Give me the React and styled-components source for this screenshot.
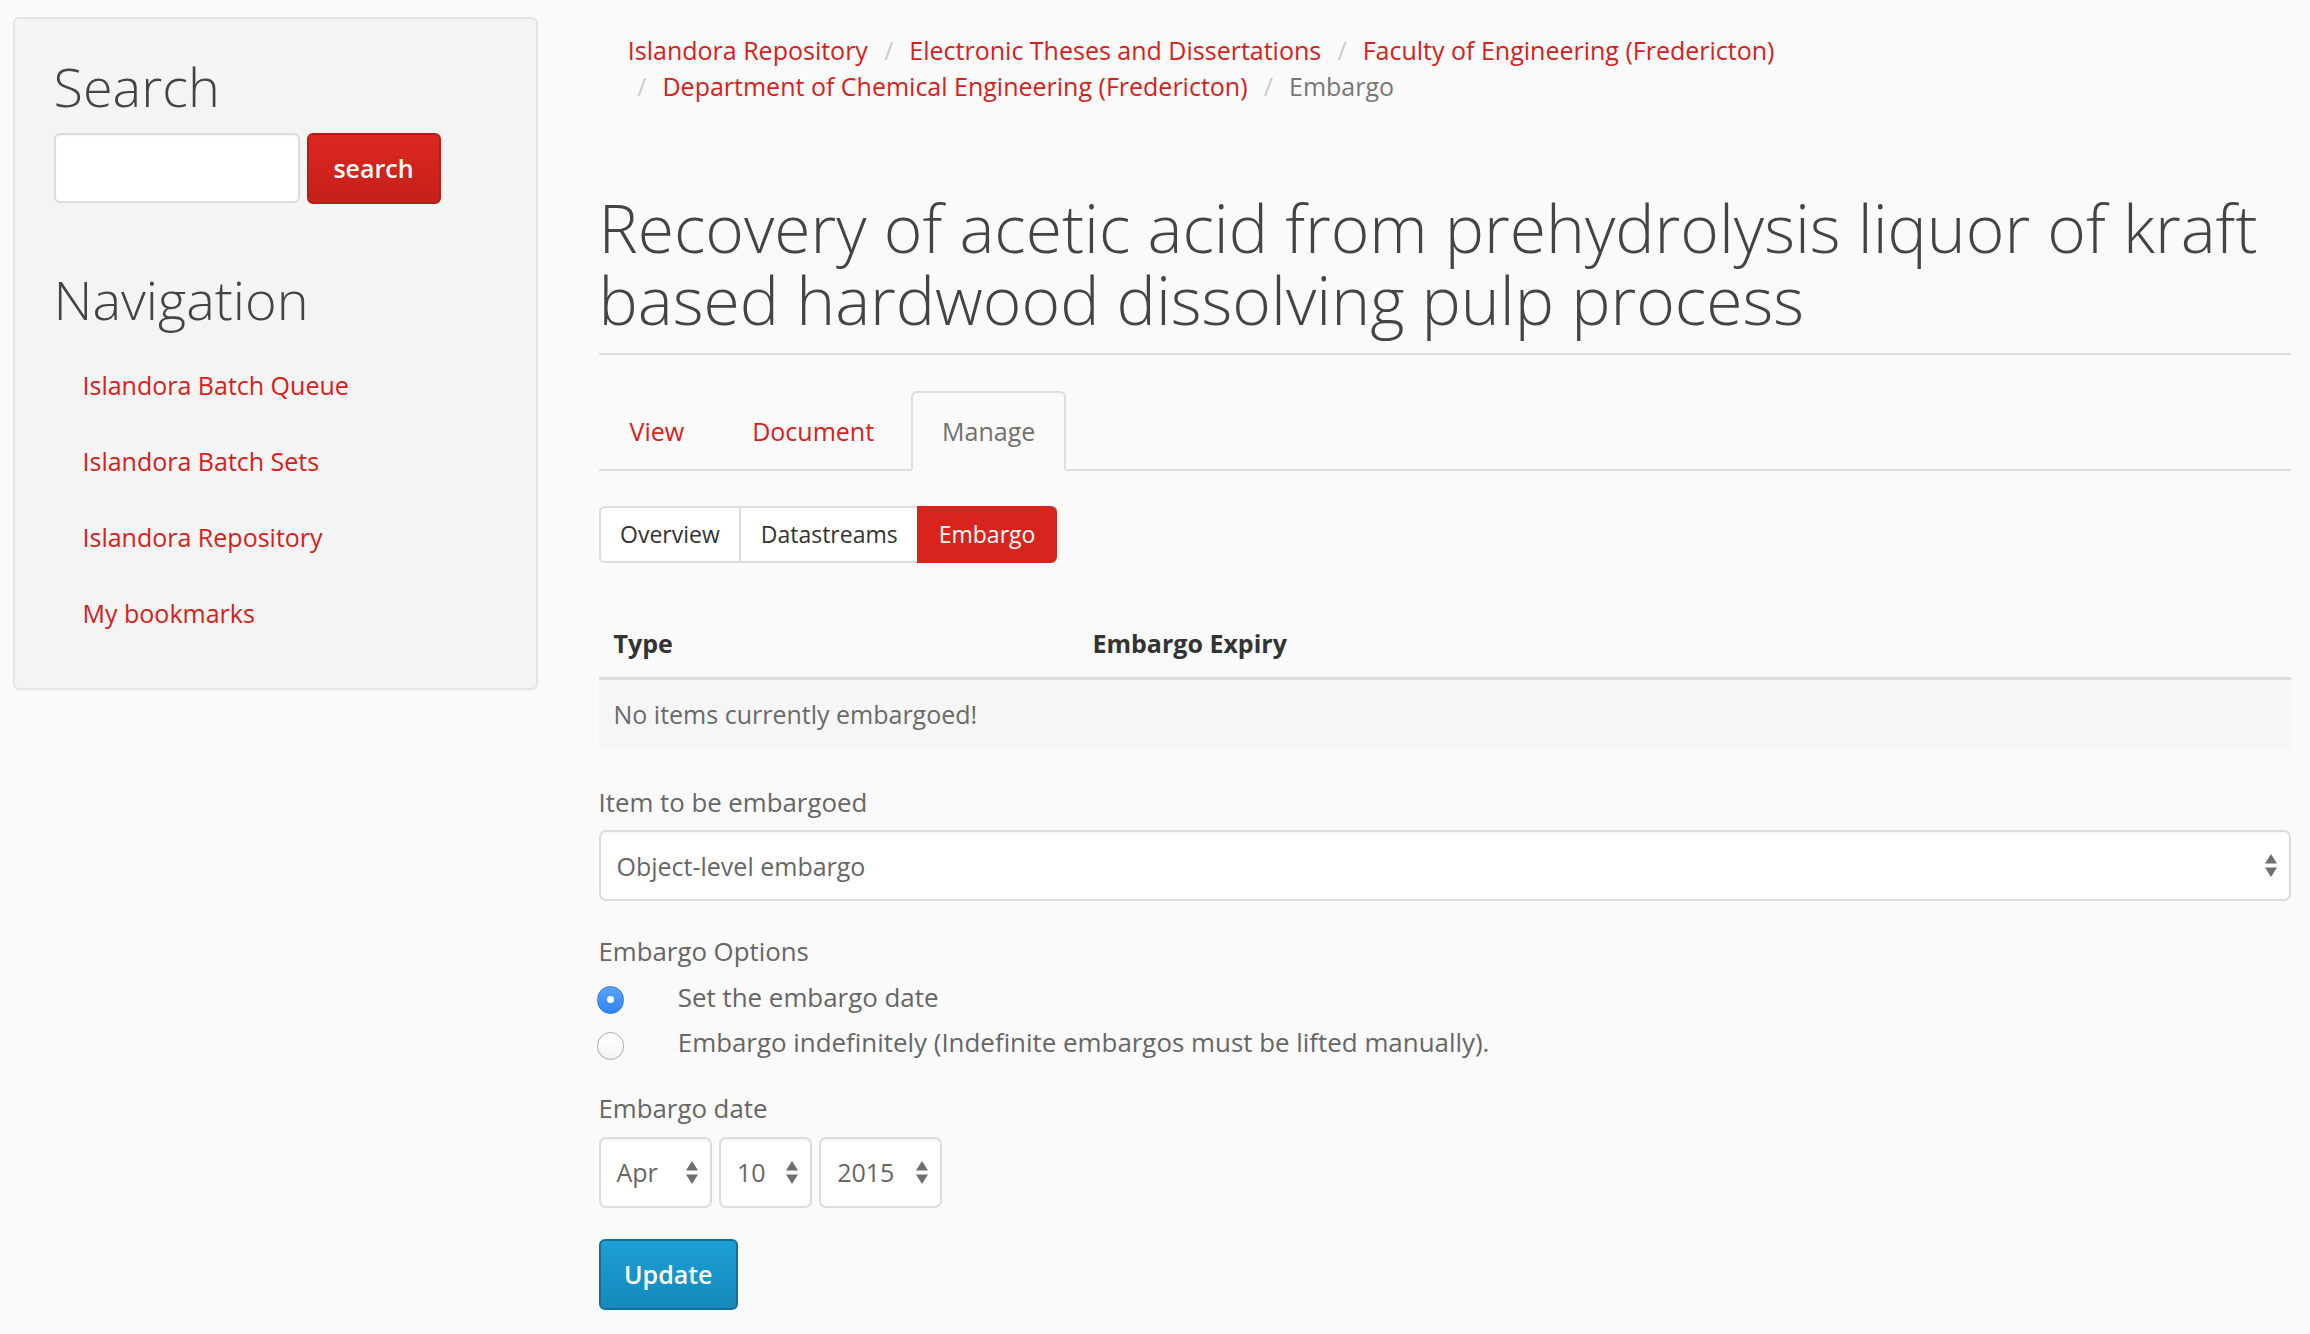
import React from 'react'
import styled, { createGlobalStyle } from 'styled-components'

const GlobalStyle = createGlobalStyle`
  * { box-sizing: border-box; }
  html, body {
    margin: 0;
    padding: 0;
    background: #fafafa;
  }
  body {
    font-family: 'Open Sans', 'Noto Sans', sans-serif;
    font-size: 25px;
    color: #555;
  }
`

const RED = '#d8201a'

const Page = styled.div`
  display: flex;
  align-items: flex-start;
  gap: 61px;
  width: 2310px;
  min-height: 1334px;
  padding: 16.5px 19px 0 12.5px;
`

/* ---------- sidebar ---------- */

const Sidebar = styled.aside`
  flex: none;
  width: 525px;
  background: #f4f4f4;
  border: 2px solid #e4e4e4;
  border-radius: 6px;
  padding: 37.5px 20px 36.5px 39px;
`

const BlockTitle = styled.h2`
  margin: ${p => p.$top || 0}px 0 ${p => p.$bottom || 0}px;
  font-size: 54px;
  font-weight: 300;
  line-height: 60px;
  color: #444;
`

const SearchForm = styled.form`
  display: flex;
  align-items: flex-start;
  gap: 7px;
`

const TextInput = styled.input`
  width: 246px;
  height: 70px;
  border: 2px solid #dcdcdc;
  border-radius: 6px;
  background: #fff;
  box-shadow: inset 0 1px 2px rgba(0, 0, 0, 0.06);
  font: inherit;
  padding: 0 14px;
`

const SearchButton = styled.button`
  width: 134px;
  height: 71px;
  border: 2px solid #b51d17;
  border-radius: 6px;
  background: linear-gradient(#dc271f, #c5201a);
  color: #fff;
  font-family: inherit;
  font-size: 25px;
  font-weight: 600;
  padding: 0;
`

const NavList = styled.ul`
  list-style: none;
  margin: 0;
  padding: 0 0 0 29px;
`

const NavLink = styled.a`
  display: block;
  line-height: 76px;
  color: ${RED};
  text-decoration: none;
`

/* ---------- main ---------- */

const Main = styled.main`
  flex: 1;
  min-width: 0;
`

const Breadcrumb = styled.ol`
  display: flex;
  flex-wrap: wrap;
  column-gap: 6.8px;
  list-style: none;
  margin: 16.8px 0 0;
  padding: 0 0 0 29.3px;
  line-height: 35.3px;
`

const Crumb = styled.li`
  white-space: nowrap;
  color: ${p => (p.$active ? '#777' : RED)};
`

const Sep = styled.span`
  color: #ccc;
  margin: 0 16px 0 9.5px;
`

const Title = styled.h1`
  margin: 87.5px 0 0;
  font-size: 66px;
  font-weight: 300;
  line-height: 72px;
  color: #444;
`

const Rule = styled.hr`
  margin: 17.2px 0 0;
  border: 0;
  border-top: 2px solid #dedede;
`

const TabBar = styled.ul`
  display: flex;
  list-style: none;
  margin: 36px 0 0;
  padding: 0;
  border-bottom: 2px solid #dedede;
`

const Tab = styled.li`
  height: 80px;
  margin: 0 6px -2px 0;
  padding: 0 29px;
  line-height: 76px;
  border: 2px solid ${p => (p.$active ? '#dedede' : 'transparent')};
  border-bottom-color: transparent;
  border-radius: 6px 6px 0 0;
  background: ${p => (p.$active ? '#fafafa' : 'transparent')};
  color: ${p => (p.$active ? '#707070' : RED)};
`

const PillGroup = styled.div`
  display: inline-flex;
  margin-top: 35.5px;
`

const Pill = styled.span`
  height: 57px;
  padding: 0 19.5px;
  line-height: 53px;
  font-size: 23px;
  border: 2px solid ${p => (p.$active ? '#d8241d' : '#dddddd')};
  background: ${p => (p.$active ? '#d8241d' : '#fff')};
  color: ${p => (p.$active ? '#fff' : '#333')};
  & + & { margin-left: -2px; }
  &:first-child { border-radius: 6px 0 0 6px; }
  &:last-child { border-radius: 0 6px 6px 0; }
`

const Table = styled.table`
  width: 100%;
  margin-top: 45.5px;
  border-collapse: collapse;
  th {
    text-align: left;
    font-weight: 700;
    color: #333;
    line-height: 36px;
    padding: 16px 15px;
    border-bottom: 3px solid #dcdcdc;
  }
  th:first-child { width: 479px; }
  td {
    background: #f6f6f6;
    line-height: 36px;
    padding: 16px 15px;
    color: #6a6a6a;
  }
`

const Label = styled.div`
  margin-top: ${p => p.$top}px;
  font-size: 25.8px;
  line-height: 36px;
  color: #666;
`

const SelectBox = styled.div`
  display: flex;
  align-items: center;
  justify-content: space-between;
  width: ${p => (p.$width ? `${p.$width}px` : '100%')};
  height: ${p => p.$height || 71}px;
  margin-top: 10px;
  padding: 0 12px 0 ${p => p.$padLeft || 16}px;
  background: #fff;
  border: 2px solid #dcdcdc;
  border-radius: 7px;
  box-shadow: inset 0 2px 2px rgba(0, 0, 0, 0.04);
  color: #666;
`

const DateRow = styled.div`
  display: flex;
  gap: 7.5px;
  & > ${SelectBox} { margin-top: 10.7px; }
`

const OptionRow = styled.label`
  display: flex;
  align-items: center;
  gap: 53.6px;
  font-size: 25.9px;
  line-height: 45.6px;
  color: #666;
  &:first-of-type { margin-top: 6px; }
`

const Radio = styled.span`
  flex: none;
  width: 27.7px;
  height: 27.7px;
  margin-top: ${p => (p.$checked ? 5 : 6)}px;
  margin-left: -2px;
  border-radius: 50%;
  display: flex;
  align-items: center;
  justify-content: center;
  border: 1.5px solid ${p => (p.$checked ? '#2c78e2' : '#a9a9a9')};
  background: ${p => (p.$checked ? 'linear-gradient(#59a5fb, #2f84f2)' : 'linear-gradient(#fff, #f3f3f3)')};
  &::after {
    content: '';
    display: ${p => (p.$checked ? 'block' : 'none')};
    width: 7px;
    height: 7px;
    border-radius: 50%;
    background: #fff;
  }
`

const UpdateButton = styled.button`
  display: block;
  width: 139.5px;
  height: 71.7px;
  margin-top: 31px;
  padding: 0;
  border: 2px solid #11709c;
  border-radius: 6px;
  background: linear-gradient(#1ca0d3, #1588bc);
  color: #fff;
  font-family: inherit;
  font-size: 25px;
  font-weight: 600;
`

const Arrows = () => (
  <svg width="12" height="23" viewBox="0 0 12 23">
    <path d="M6 0 L12 9.5 L0 9.5 Z M0 13.5 L12 13.5 L6 23 Z" fill="#6f6f6f" />
  </svg>
)

const crumbs = [
  'Islandora Repository',
  'Electronic Theses and Dissertations',
  'Faculty of Engineering (Fredericton)',
  'Department of Chemical Engineering (Fredericton)',
]

const navItems = [
  'Islandora Batch Queue',
  'Islandora Batch Sets',
  'Islandora Repository',
  'My bookmarks',
]

const App = () => (
  <>
    <GlobalStyle />
    <Page>
      <Sidebar>
        <BlockTitle $bottom={16.6}>Search</BlockTitle>
        <SearchForm onSubmit={e => e.preventDefault()}>
          <TextInput type="text" aria-label="Search" />
          <SearchButton type="submit">search</SearchButton>
        </SearchForm>
        <BlockTitle $top={65.4} $bottom={18.3}>Navigation</BlockTitle>
        <NavList>
          {navItems.map(item => (
            <li key={item}>
              <NavLink href="#">{item}</NavLink>
            </li>
          ))}
        </NavList>
      </Sidebar>

      <Main>
        <Breadcrumb>
          {crumbs.map((c, i) => (
            <Crumb key={c}>
              {i > 0 && <Sep>/</Sep>}
              {c}
            </Crumb>
          ))}
          <Crumb $active>
            <Sep>/</Sep>
            Embargo
          </Crumb>
        </Breadcrumb>

        <Title>
          Recovery of acetic acid from prehydrolysis liquor of kraft based hardwood dissolving pulp process
        </Title>
        <Rule />

        <TabBar>
          <Tab>View</Tab>
          <Tab>Document</Tab>
          <Tab $active>Manage</Tab>
        </TabBar>

        <PillGroup>
          <Pill>Overview</Pill>
          <Pill>Datastreams</Pill>
          <Pill $active>Embargo</Pill>
        </PillGroup>

        <Table>
          <thead>
            <tr>
              <th>Type</th>
              <th>Embargo Expiry</th>
            </tr>
          </thead>
          <tbody>
            <tr>
              <td colSpan={2}>No items currently embargoed!</td>
            </tr>
          </tbody>
        </Table>

        <Label $top={36.7}>Item to be embargoed</Label>
        <SelectBox>
          <span>Object-level embargo</span>
          <Arrows />
        </SelectBox>

        <Label $top={31.3}>Embargo Options</Label>
        <OptionRow>
          <Radio $checked />
          Set the embargo date
        </OptionRow>
        <OptionRow>
          <Radio />
          Embargo indefinitely (Indefinite embargos must be lifted manually).
        </OptionRow>

        <Label $top={24.6}>Embargo date</Label>
        <DateRow>
          <SelectBox $width={113} $height={70.6} $padLeft={16}>
            <span>Apr</span>
            <Arrows />
          </SelectBox>
          <SelectBox $width={92.7} $height={70.6} $padLeft={16}>
            <span>10</span>
            <Arrows />
          </SelectBox>
          <SelectBox $width={122.7} $height={70.6} $padLeft={16}>
            <span>2015</span>
            <Arrows />
          </SelectBox>
        </DateRow>

        <UpdateButton type="button">Update</UpdateButton>
      </Main>
    </Page>
  </>
)

export default App
